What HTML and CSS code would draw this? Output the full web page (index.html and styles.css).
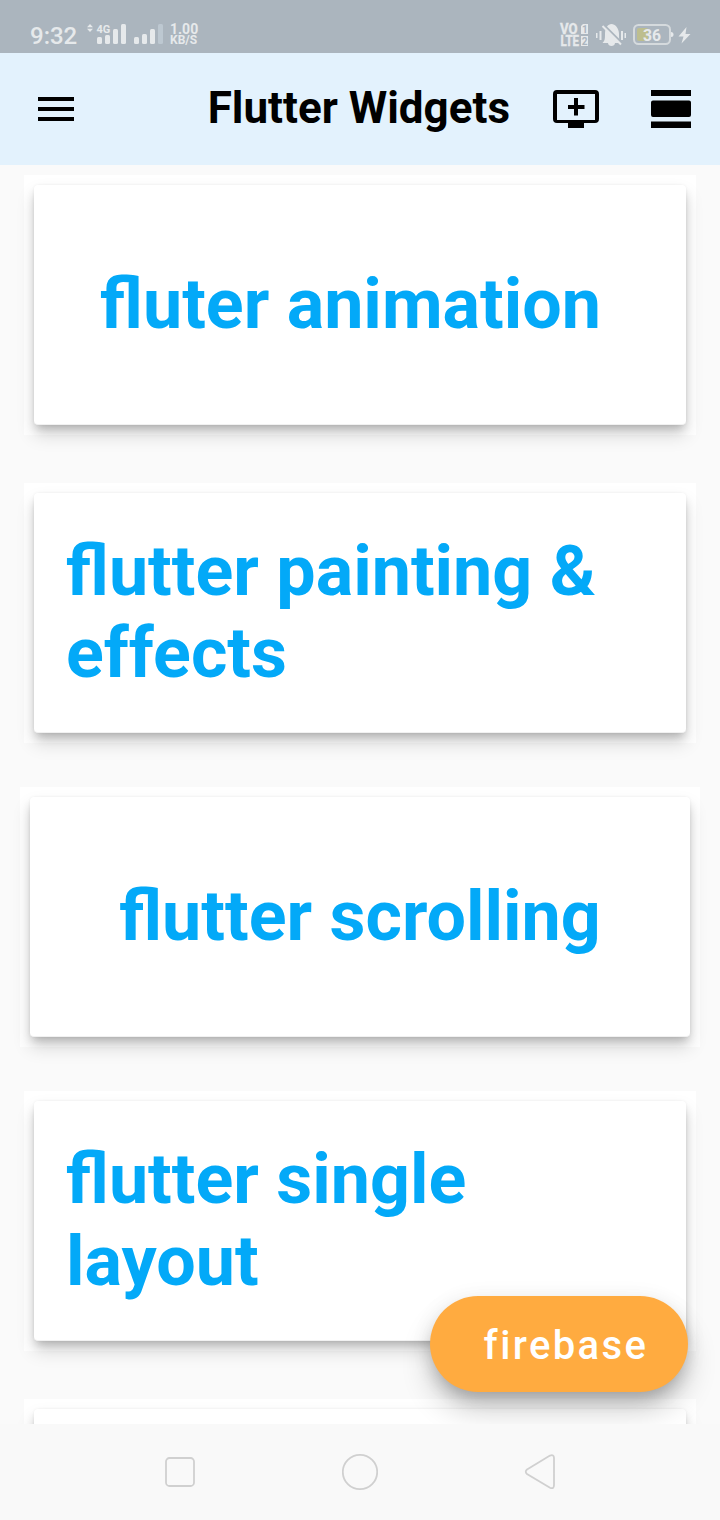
FILE: index.html
```html
<!DOCTYPE html>
<html lang="en">
<head>
<meta charset="utf-8">
<title>Flutter Widgets</title>
<link rel="stylesheet" href="styles.css">
</head>
<body>
<div class="screen">
  <div class="status">
    <span class="clock">9:32</span>
    <svg class="signal" width="80" height="24" viewBox="0 0 80 24" fill="#e6e9eb">
      <path d="M3 4.300 6 1l3 3.300zM3 5.700h6L6 9z"/>
      <text class="net" x="12.500" y="9.500">4G</text>
      <rect x="13" y="14" width="5" height="7" rx="1.500"/><rect x="21" y="12" width="5" height="9" rx="1.500"/>
      <rect x="29" y="6" width="5" height="15" rx="1.500"/><rect x="37" y="1" width="5" height="20" rx="1.500"/>
      <rect x="50" y="14" width="5" height="7" rx="1.500"/><rect x="58" y="11" width="5" height="10" rx="1.500"/>
      <rect x="66" y="6" width="5" height="15" rx="1.500"/><rect x="74" y="1" width="5" height="20" rx="1.500" fill="#bdc8d1"/>
    </svg>
    <div class="speed"><span class="rate">1.00</span><span class="unit">KB/S</span></div>
    <svg class="system" width="134" height="26" viewBox="0 0 134 26" fill="#e6e9eb">
      <text class="volte" x="0" y="11" textLength="17.500" lengthAdjust="spacingAndGlyphs">VO</text>
      <text class="volte" x="0.500" y="23" textLength="18.500" lengthAdjust="spacingAndGlyphs">LTE</text>
      <path d="M23 1h5v10h-7V3zM21 13h7v10h-7z"/>
      <text class="sim" x="22" y="9.500">1</text><text class="sim" x="21.800" y="21.500">2</text>
      <path d="M36 10h1.500v5H36zM39.500 8h2v9h-2zM61 8h2v9h-2zM64.500 10H66v5h-1.500z"/>
      <path d="M42.500 20c2-2 2.500-3 2.500-9 0-6 3-10 6.500-10S59 5 59 11c0 6 .5 7 2 9zM48 20h7c0 4-7 4-7 0z"/>
      <path d="m43.500 1.500 18.500 18.500" stroke="#abb5be" stroke-width="2"/>
      <path d="m42.500 3 18.500 18.500" stroke="#e6e9eb" stroke-width="2"/>
      <rect x="77" y="5" width="11" height="13" rx="2" fill="#bdbe8f"/>
      <rect x="74" y="2" width="36" height="19" rx="4.500" fill="none" stroke="#d5dadd" stroke-width="2"/>
      <path d="M111 9q2.500 0 2.500 2.500T111 14z"/>
      <text class="charge" x="83" y="18" textLength="18" lengthAdjust="spacingAndGlyphs">36</text>
      <path d="M126.500 4 118.500 13.500h5L121.500 20.500l9-9.500h-5z"/>
    </svg>
  </div>
  <header class="appbar">
    <svg class="menu" width="36" height="24" viewBox="0 0 36 24"><path d="M0 0h36v4H0zM0 10h36v4H0zM0 20h36v4H0z"/></svg>
    <h1 class="title">Flutter Widgets</h1>
    <svg class="addqueue" width="46" height="38" viewBox="0 0 46 38"><path fill-rule="evenodd" d="M4 0h38q4 0 4 4v25q0 4-4 4H31v5H15v-5H4q-4 0-4-4V4q0-4 4-4zM4 4v26h38V4zM21 8h4v7h6.500v4H25v6.500h-4V19h-6v-4h6z"/></svg>
    <svg class="viewday" width="40" height="38" viewBox="0 0 40 38"><path d="M0 0h40v6H0zM2 10.500h36q2 0 2 2V25q0 2-2 2H2q-2 0-2-2V12.500q0-2 2-2zM0 31.500h40V38H0z"/></svg>
  </header>
  <main class="list">
    <section class="frame"><div class="card"><h2 class="label first">fluter animation</h2></div></section>
    <section class="frame"><div class="card"><h2 class="label wrap">flutter painting &amp; effects</h2></div></section>
    <section class="frame wide"><div class="card"><h2 class="label">flutter scrolling</h2></div></section>
    <section class="frame"><div class="card"><h2 class="label wrap">flutter single layout</h2></div></section>
    <section class="frame"><div class="card"></div></section>
    <button class="fab">firebase</button>
  </main>
  <nav class="navbar">
    <svg width="36" height="40" viewBox="0 0 36 40"><rect x="4" y="6" width="28" height="28" rx="3.500"/></svg>
    <svg width="36" height="40" viewBox="0 0 36 40"><circle cx="18" cy="20" r="17.200"/></svg>
    <svg width="36" height="40" viewBox="0 0 36 40"><path d="M5 17.500 28 3.600Q32 2 32 6v27q0 4.500-4 2.700L5 22q-2.500-2.250 0-4.500z"/></svg>
  </nav>
</div>
</body>
</html>
```
FILE: styles.css
```css
* { box-sizing: border-box; }
body { margin: 0; font-family: Roboto, "Liberation Sans", sans-serif; }
.screen { width: 720px; height: 1520px; display: flex; flex-direction: column; overflow: hidden; background: #fafafa; }
.status { height: 53px; flex: none; display: flex; align-items: flex-start; padding: 23px 26px 0 30px; background: #abb5be; color: #e6e9eb; }
.clock { width: 51px; font-size: 24px; line-height: 26px; font-weight: 500; }
.signal { margin-left: 3px; }
.net { font-size: 11px; font-weight: 700; }
.speed { margin-left: 6px; display: flex; flex-direction: column; font-weight: 700; }
.rate { font-size: 14px; line-height: 13px; }
.unit { font-size: 12px; line-height: 9px; }
.system { margin-left: auto; overflow: visible; }
.volte { font-size: 14px; font-weight: 700; stroke: #e6e9eb; stroke-width: 0.4px; }
.sim { font-size: 10px; font-weight: 700; fill: #abb5be; }
.charge { font-size: 16px; font-weight: 700; }
.appbar { height: 112px; flex: none; display: flex; align-items: center; padding: 0 29px 0 38px; background: #e3f2fd; }
.title { margin: 0 43px 2px auto; font-size: 44px; line-height: 52px; font-weight: 700; white-space: nowrap; }
.viewday { margin-left: 52px; }
.list { position: relative; height: 1259px; flex: none; overflow: hidden; padding: 10px 24px 0; }
.frame { height: 260px; padding: 10px; margin-bottom: 48px; background: #fff; }
.frame.wide { margin: -4px -4px 44px; }
.card { height: 240px; display: flex; align-items: center; justify-content: center; padding-bottom: 1px; border-radius: 4px; background: #fff; border-bottom: 1px solid #f1f1f1; box-shadow: 0 6px 10px -2px rgba(0,0,0,.2), 0 10px 18px rgba(0,0,0,.15), 0 0 3px rgba(0,0,0,.06); }
.label { margin: 0; font-size: 70px; line-height: 82px; font-weight: 700; color: #03a9f8; }
.label.first { margin-right: 19px; }
.label.wrap { width: 588px; }
.fab { position: absolute; left: 430px; top: 1131px; width: 258px; height: 96px; padding: 4px 0 0 14px; border: 0; border-radius: 48px; background: #ffab40; color: #fff; font: 500 40px/48px Roboto, sans-serif; letter-spacing: 2.4px; box-shadow: 0 10px 16px -4px rgba(0,0,0,.18), 0 18px 30px rgba(0,0,0,.2), 0 3px 24px rgba(0,0,0,.06); }
.navbar { height: 96px; display: flex; justify-content: center; align-items: center; gap: 144px; background: #f9f9f9; }
.navbar svg { fill: none; stroke: #d0d0d0; stroke-width: 1.8; }
```
